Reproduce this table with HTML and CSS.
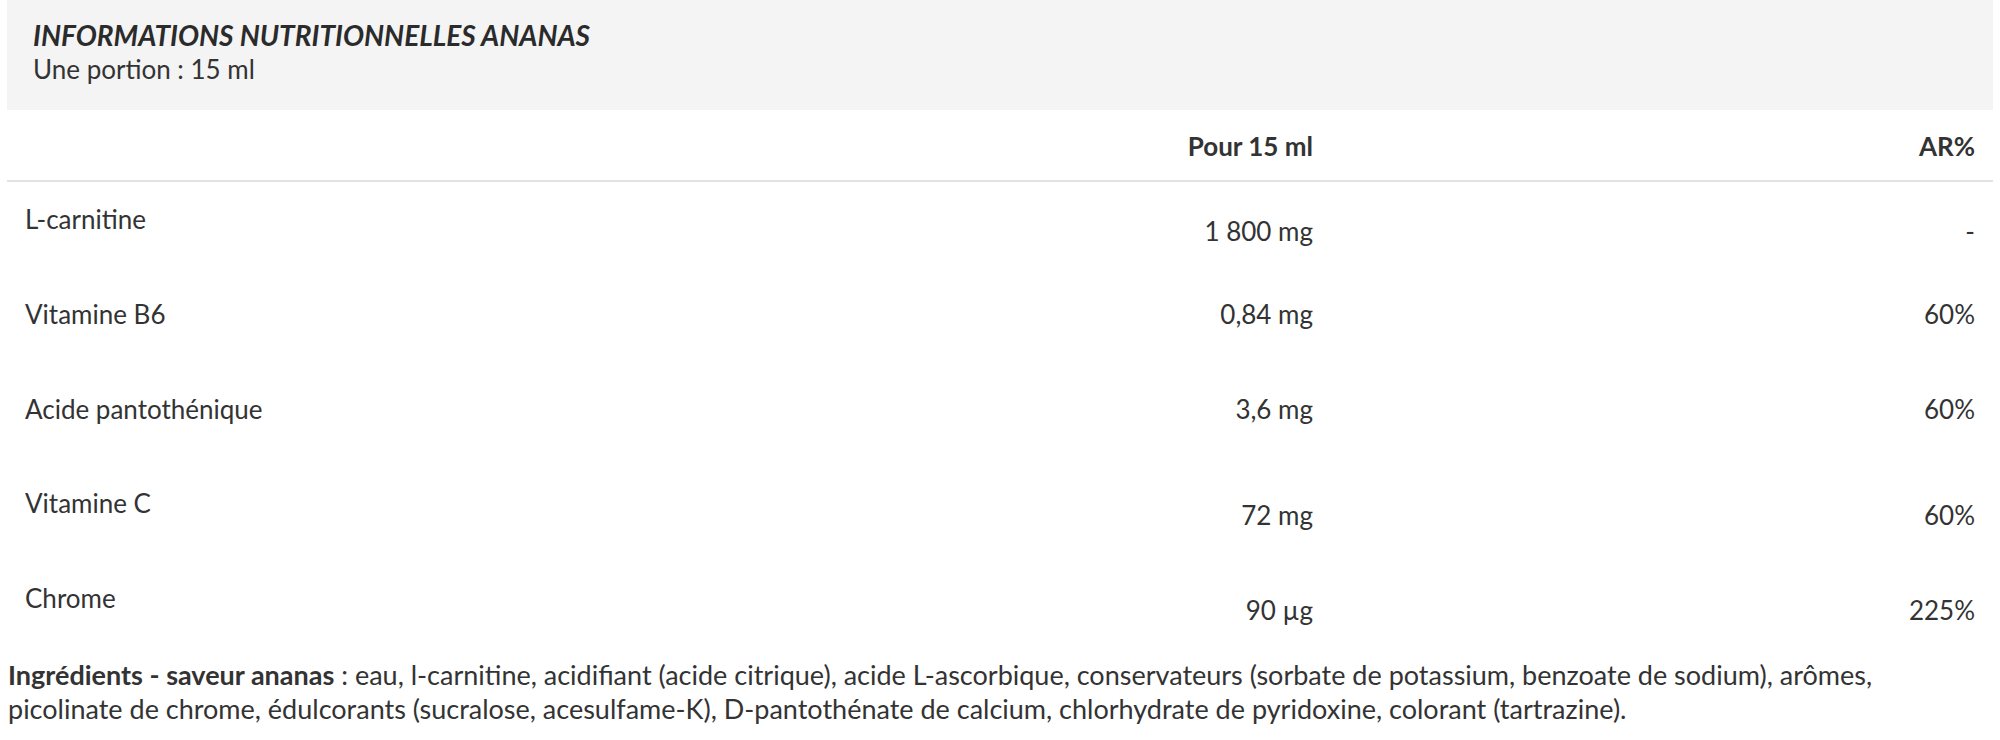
FILE: index.html
```html
<!DOCTYPE html>
<html lang="fr">
<head>
    <meta charset="UTF-8">
    <meta name="viewport" content="width=device-width, initial-scale=1.0">
    <title>Informations nutritionnelles ananas</title>
    <link rel="stylesheet" href="styles.css">
</head>
<body>
    <div class="nutrition">
        <div class="nutrition-head">
            <h2>Informations nutritionnelles ananas</h2>
            <p>Une portion : 15 ml</p>
        </div>

        <div class="nutrition-table">
            <div class="row row-header">
                <span class="cell"></span>
                <span class="cell amount">Pour 15 ml</span>
                <span class="cell percent">AR%</span>
            </div>
            <!-- rows marked "low" have their values sitting a half line lower -->
            <div class="row low">
                <span class="cell name">L-carnitine</span>
                <span class="cell amount">1 800 mg</span>
                <span class="cell percent">-</span>
            </div>
            <div class="row">
                <span class="cell name">Vitamine B6</span>
                <span class="cell amount">0,84 mg</span>
                <span class="cell percent">60%</span>
            </div>
            <div class="row">
                <span class="cell name">Acide pantothénique</span>
                <span class="cell amount">3,6 mg</span>
                <span class="cell percent">60%</span>
            </div>
            <div class="row low">
                <span class="cell name">Vitamine C</span>
                <span class="cell amount">72 mg</span>
                <span class="cell percent">60%</span>
            </div>
            <div class="row low">
                <span class="cell name">Chrome</span>
                <span class="cell amount">90 µg</span>
                <span class="cell percent">225%</span>
            </div>
        </div>

        <p class="ingredients"><strong>Ingrédients - saveur ananas</strong> : eau, l-carnitine, acidifiant (acide citrique), acide L-ascorbique, conservateurs (sorbate de potassium, benzoate de sodium), arômes, picolinate de chrome, édulcorants (sucralose, acesulfame-K), D-pantothénate de calcium, chlorhydrate de pyridoxine, colorant (tartrazine).</p>
    </div>
</body>
</html>
```

FILE: styles.css
```css
body {
    font-family: Lato, "Liberation Sans", sans-serif;
    margin: 0;
    padding: 0;
    color: #333;
    background-color: #fff;
}

.nutrition {
    padding: 0 7px;
}

.nutrition-head {
    background-color: #f4f4f4;
    padding: 19px 26px 24px;
}

.nutrition-head h2 {
    margin: 0;
    font-size: 28px;
    line-height: 33px;
    font-weight: bold;
    font-style: italic;
    text-transform: uppercase;
    color: #2b2b2b;
}

.nutrition-head p {
    margin: 0;
    font-size: 26px;
    line-height: 34px;
}

.row {
    display: grid;
    grid-template-columns: repeat(3, 1fr);
    height: 94.75px;
    font-size: 26px;
    line-height: 26px;
}

.row-header {
    height: 72px;
    box-sizing: border-box;
    border-bottom: 2px solid #e2e2e2;
    font-weight: bold;
}

.cell {
    padding: 24px 18px 0;
}

.row-header .cell {
    padding-top: 23px;
}

.amount,
.percent {
    text-align: right;
}

.row.low .amount,
.row.low .percent {
    padding-top: 36px;
}

.ingredients {
    margin: 2px 0 0;
    padding: 0 1px;
    font-size: 27px;
    line-height: 34px;
}
```
